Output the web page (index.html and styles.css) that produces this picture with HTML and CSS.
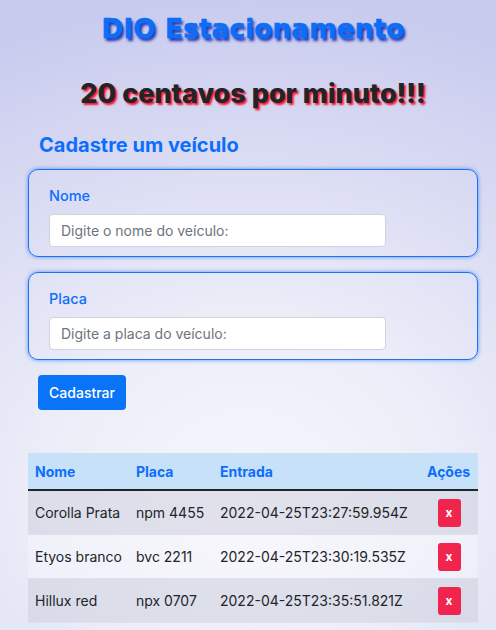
FILE: index.html
```html
<!DOCTYPE html>
<html lang="pt-BR">
<head>
<meta charset="utf-8">
<title>DIO Estacionamento</title>
<link rel="stylesheet" href="styles.css">
</head>
<body>
<main class="page">
  <h1 class="title">DIO Estacionamento</h1>
  <h2 class="price">20 centavos por minuto!!!</h2>
  <h3 class="section">Cadastre um veículo</h3>
  <form class="form">
    <div class="field">
      <label class="label">Nome</label>
      <input class="input" type="text" placeholder="Digite o nome do veículo:">
    </div>
    <div class="field">
      <label class="label">Placa</label>
      <input class="input" type="text" placeholder="Digite a placa do veículo:">
    </div>
    <div class="actions"><button type="button" class="btn">Cadastrar</button></div>
  </form>
  <table class="table">
    <colgroup>
      <col class="col-nome"><col class="col-placa"><col class="col-entrada"><col class="col-acoes">
    </colgroup>
    <thead>
      <tr><th>Nome</th><th>Placa</th><th>Entrada</th><th class="c-acoes">Ações</th></tr>
    </thead>
    <tbody>
      <tr><td>Corolla Prata</td><td>npm 4455</td><td>2022-04-25T23:27:59.954Z</td><td class="c-acoes"><button class="del">x</button></td></tr>
      <tr><td>Etyos branco</td><td>bvc 2211</td><td>2022-04-25T23:30:19.535Z</td><td class="c-acoes"><button class="del">x</button></td></tr>
      <tr><td>Hillux red</td><td>npx 0707</td><td>2022-04-25T23:35:51.821Z</td><td class="c-acoes"><button class="del">x</button></td></tr>
    </tbody>
  </table>
</main>
</body>
</html>
```
FILE: styles.css
```css
html, body { margin: 0; padding: 0; }
body {
  min-height: 630px;
  font-family: Inter, "Noto Sans", sans-serif;
  color: #212529;
  background: radial-gradient(ellipse 120% 80% at 50% 78%, #f6f6fc 0%, #ecedf8 35%, #c8caee 100%);
  background-color: #c8caee;
}
.page {
  padding: 0 18px 0 28px;
}
.title {
  margin: 0;
  padding-top: 13px;
  text-align: center;
  font-family: "DejaVu Sans", sans-serif;
  font-weight: 900;
  font-size: 26.5px;
  line-height: 31px;
  color: #0a6ef8;
  text-shadow: 2px 3px 3px #1a2fb0;
  -webkit-text-stroke: 0.6px #0a6ef8;
}
.price {
  margin: 0;
  padding-top: 33px;
  text-align: center;
  font-family: Inter, sans-serif;
  font-weight: 800;
  font-size: 27px;
  line-height: 34px;
  color: #212529;
  text-shadow: 2px 2px 2px #ff1030;
}
.section {
  margin: 0;
  padding: 21px 0 0 11px;
  font-weight: 700;
  font-size: 20px;
  line-height: 26px;
  color: #0d6efd;
}
.form {
  display: flex;
  flex-direction: column;
  gap: 15px;
  margin-top: 11px;
}
.field {
  border: 1.5px solid #1a73f5;
  border-radius: 10px;
  box-shadow: 0 0 4px rgba(30, 110, 250, 0.7);
  padding: 17px 20px 8px 20px;
  height: 88px;
  box-sizing: border-box;
  display: flex;
  flex-direction: column;
  align-items: flex-start;
}
.label {
  color: #0d6efd;
  font-size: 14.5px;
  font-weight: 500;
  line-height: 18px;
  margin-bottom: 9px;
}
.input {
  width: 337px;
  height: 33px;
  box-sizing: border-box;
  border: 1px solid #ced4da;
  border-radius: 4px;
  background: #fff;
  padding: 0 11px;
  font-family: Inter, sans-serif;
  font-size: 14px;
  color: #212529;
}
.input::placeholder { color: #6c757d; }
.actions { padding-left: 10px; }
.btn {
  width: 88px;
  height: 35px;
  border: none;
  border-radius: 4px;
  background: #0a74f8;
  color: #fff;
  font-family: Inter, sans-serif;
  font-size: 14px;
  font-weight: 500;
}
.table {
  margin-top: 43px;
  width: 100%;
  border-collapse: collapse;
  table-layout: fixed;
  font-size: 14px;
  white-space: nowrap;
}
.col-nome { width: 101px; }
.col-placa { width: 84px; }
.col-acoes { width: 58px; }
.table thead tr {
  background: #c7e1f8;
  border-bottom: 2px solid #212529;
}
.table th {
  height: 36px;
  padding: 0 7px;
  text-align: left;
  color: #0d6efd;
  font-weight: 700;
  font-size: 14px;
}
.table th.c-acoes { text-align: right; padding-right: 8px; }
.table td {
  height: 43px;
  padding: 0 7px;
  border-bottom: 1px solid #dee0ea;
  vertical-align: middle;
}
.table td.c-acoes { text-align: center; }
.table tbody tr:nth-child(odd) { background: rgba(200, 202, 215, 0.45); }
.table tbody tr:nth-child(even) { background: rgba(255, 255, 255, 0.25); }
.del {
  width: 23px;
  height: 28px;
  border: none;
  border-radius: 3px;
  background: #f0244d;
  color: #fff;
  font-family: Inter, sans-serif;
  font-weight: 700;
  font-size: 12px;
  padding: 0;
}
```
